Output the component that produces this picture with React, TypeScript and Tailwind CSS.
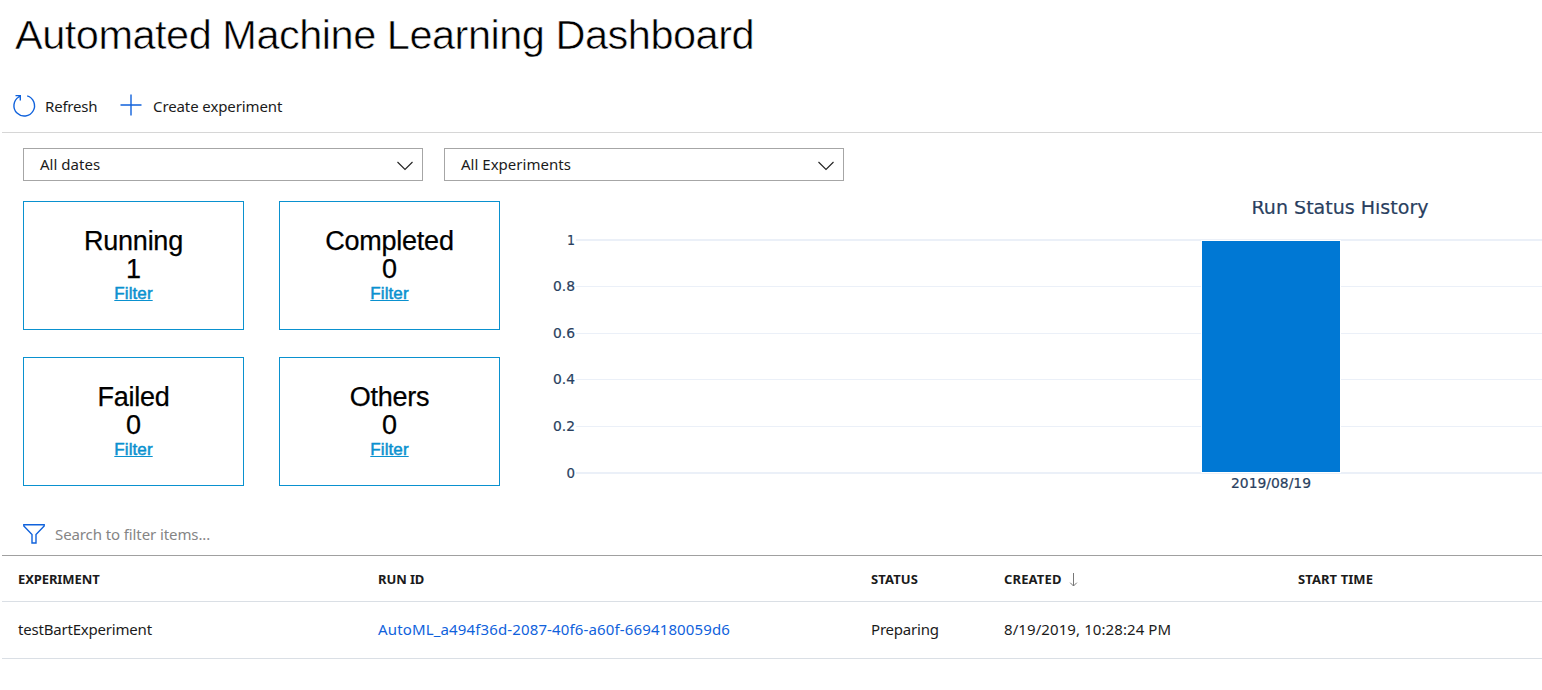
import React from "react";

const ui = "font-['Noto_Sans',sans-serif]";

function Fit({ w, children, anchor = "start", x, y, className }: { w: number; children: string; anchor?: "start" | "middle" | "end"; x: number; y: number; className: string }) {
  return (
    <text x={x} y={y} textAnchor={anchor} textLength={w} lengthAdjust="spacingAndGlyphs" className={className}>
      {children}
    </text>
  );
}

function Select({ label }: { label: string }) {
  return (
    <button className="flex h-[33px] w-[400px] items-center justify-between border border-[#a6a6a6] pr-[8px] pl-4 text-[15px] text-[#1b1b1b]">
      <span className="tracking-[0.02px]">{label}</span>
      <svg width="18" height="18" viewBox="0 0 18 18" fill="none" stroke="#222" strokeWidth="1.1" className="mt-0.5">
        <path d="M1.5 5 L9 12.5 L16.5 5" />
      </svg>
    </button>
  );
}

function Card({ label, count }: { label: string; count: number }) {
  return (
    <div className="flex h-[129px] w-[221px] flex-col items-center border border-[#0a91cf] pt-[25px] font-['Liberation_Sans',sans-serif] text-black">
      <div className="text-[27px] leading-[28px] tracking-[-0.25px] [-webkit-text-stroke:0.25px_black]">{label}</div>
      <div className="text-[27px] leading-[28px] [-webkit-text-stroke:0.25px_black]">{count}</div>
      <a className="text-[17px] leading-[22px] tracking-[0.1px] text-[#0a91cf] underline [-webkit-text-stroke:0.5px_#0a91cf]">Filter</a>
    </div>
  );
}

const ticks = [
  { label: "1", y: 39, base: 44, w: 8 },
  { label: "0.8", y: 85.5, base: 90, w: 22 },
  { label: "0.6", y: 132.5, base: 137, w: 22 },
  { label: "0.4", y: 178.5, base: 183, w: 22 },
  { label: "0.2", y: 225.5, base: 230, w: 22 },
  { label: "0", y: 272, base: 277, w: 8.5 },
];

function Chart() {
  return (
    <svg width="1002" height="300" viewBox="0 0 1002 300" className="block font-['DejaVu_Sans',sans-serif]">
      {ticks.map((t) => (
        <g key={t.label}>
          <line x1="36" x2="1002" y1={t.y} y2={t.y} stroke="#ebf0f8" strokeWidth={t.w < 10 ? 2 : 1} />
          <Fit x={35} y={t.base} w={t.w} anchor="end" className="fill-[#2a3f5f] stroke-[#2a3f5f] stroke-[0.2px] text-[13.5px]">{t.label}</Fit>
        </g>
      ))}
      <rect x="661" y="39" width="140" height="233" fill="#fff" />
      <rect x="662" y="40" width="138" height="231" fill="#0078d4" />
      <Fit x={731} y={287} w={80} anchor="middle" className="fill-[#2a3f5f] stroke-[#2a3f5f] stroke-[0.2px] text-[13.5px]">2019/08/19</Fit>
      <Fit x={800} y={13} w={177} anchor="middle" className="fill-[#2a3f5f] stroke-[#2a3f5f] stroke-[0.2px] text-[19px]">Run Status History</Fit>
    </svg>
  );
}

export default function App() {
  return (
    <div className={`h-[690px] w-[1542px] overflow-hidden bg-white text-[#1b1b1b] ${ui}`}>
      <h1 className="h-[86px] pt-[11px] pl-[15px] font-['Liberation_Sans',sans-serif] text-[41.5px] leading-[48px] tracking-[-0.49px] whitespace-nowrap text-black [-webkit-text-stroke:0.55px_white]">
        Automated Machine Learning Dashboard
      </h1>
      <div className="ml-0.5 flex h-[47px] items-center border-b border-[#d6d6d6] pb-[5px] pl-[9px] text-[15px]">
        <svg width="26" height="26" viewBox="0 0 26 26" fill="none" stroke="#1062dc" strokeWidth="1.4" className="-mt-0.5">
          <path d="M16.2 2.9 A10.3 10.3 0 1 1 7.8 4 L9.3 2.6 M4.5 2.6 H9.3 V7.5" />
        </svg>
        <span className="ml-2 w-[75px] tracking-[-0.2px]">Refresh</span>
        <svg width="22" height="22" viewBox="0 0 22 22" fill="none" stroke="#1062dc" strokeWidth="1.4" className="-mt-[3px]">
          <path d="M0.5 11 H21.5 M11 0.5 V21.5" />
        </svg>
        <span className="ml-[11px] tracking-[-0.1px]">Create experiment</span>
      </div>
      <div className="flex gap-[21px] pt-[15px] pl-[23px]">
        <Select label="All dates" />
        <Select label="All Experiments" />
      </div>
      <div className="flex pt-5 pl-[23px]">
        <div className="grid w-[517px] grid-cols-[221px_221px] content-start gap-x-[35px] gap-y-[27px]">
          <Card label="Running" count={1} />
          <Card label="Completed" count={0} />
          <Card label="Failed" count={0} />
          <Card label="Others" count={0} />
        </div>
        <Chart />
      </div>
      <div className="ml-0.5 flex h-[55px] items-center border-b border-[#a0a0a0] pt-3 pl-5 text-[15px] text-[#858585]">
        <svg width="24" height="22" viewBox="0 0 24 22" fill="none" stroke="#1062dc" strokeWidth="1.4">
          <path d="M1.8 1.8 H22.2 V3 L14 11.5 V20 H10 V11.5 L1.8 3 Z" />
        </svg>
        <span className="ml-[9px] tracking-[-0.1px]">Search to filter items...</span>
      </div>
      <div className="ml-0.5 grid h-[46px] grid-cols-[360px_493px_133px_294px_244px] items-center border-b border-[#dadfe5] pt-0.5 pl-4 text-[13px] font-bold whitespace-nowrap">
        <span className="tracking-[-0.1px]">EXPERIMENT</span>
        <span className="tracking-[-0.1px]">RUN ID</span>
        <span className="tracking-[0.1px]">STATUS</span>
        <span className="flex items-center tracking-[0.15px]">
          CREATED
          <svg width="9" height="15" viewBox="0 0 9 15" fill="none" stroke="#777" strokeWidth="1" className="ml-[7px]">
            <path d="M4.5 1 V14 M1.2 10.7 L4.5 14 L7.8 10.7" />
          </svg>
        </span>
        <span className="tracking-[0.08px]">START TIME</span>
      </div>
      <div className="ml-0.5 grid h-[57px] grid-cols-[360px_493px_133px_294px_244px] items-center border-b border-[#dadfe5] pb-0.5 pl-4 text-[15px] whitespace-nowrap">
        <span className="tracking-[-0.2px]">testBartExperiment</span>
        <span className="tracking-[0.14px] text-[#1062dc]">AutoML_a494f36d-2087-40f6-a60f-6694180059d6</span>
        <span className="tracking-[-0.2px]">Preparing</span>
        <span className="tracking-[0.09px]">8/19/2019, 10:28:24 PM</span>
        <span />
      </div>
    </div>
  );
}
